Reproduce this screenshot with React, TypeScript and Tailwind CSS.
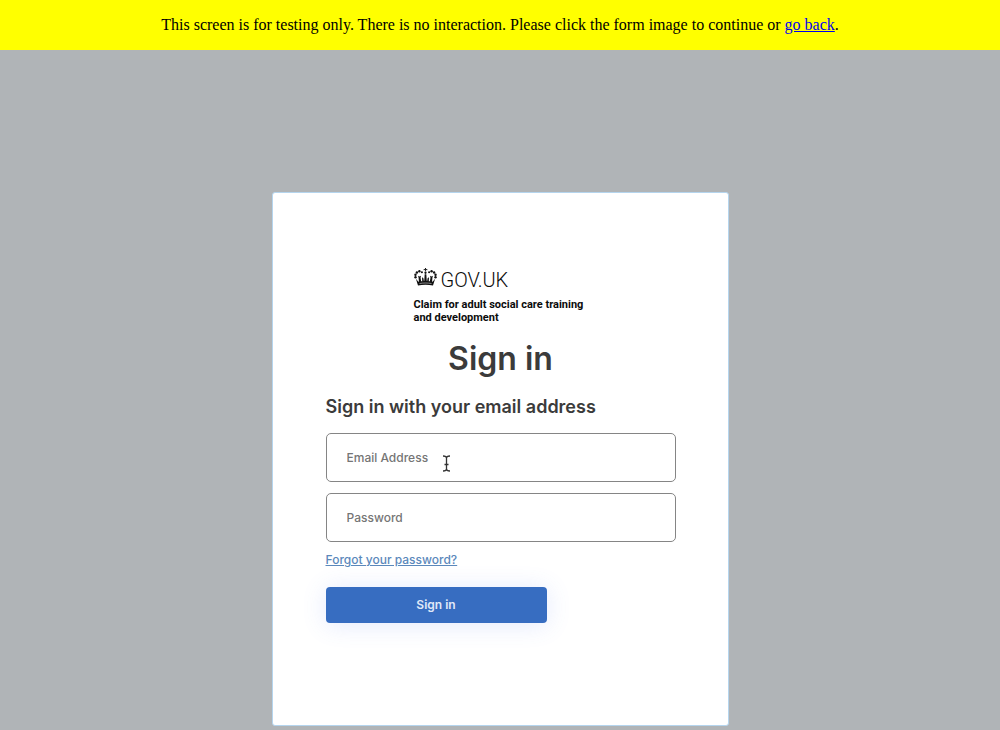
import type { ReactNode } from "react";

function Crown() {
  return (
    <svg viewBox="0 0 46 38" className="h-[19px] w-[23px] shrink-0" aria-hidden="true">
      <g fill="#111">
        <path d="M21.800 2h2.400l-.5 2.700 2.900-.6v2.600l-2.900-.6.5 2.600h-2.400l.5-2.600-2.900.6V4.100l2.900.6z" />
        <circle cx="23" cy="11.500" r="2.300" />
        <circle cx="15.800" cy="10.400" r="2.100" />
        <circle cx="10.800" cy="8.600" r="2.400" />
        <circle cx="5.800" cy="11" r="2.400" />
        <circle cx="2.900" cy="15.400" r="2.400" />
        <circle cx="3" cy="20.600" r="2.400" />
        <circle cx="30.200" cy="10.400" r="2.100" />
        <circle cx="35.200" cy="8.600" r="2.400" />
        <circle cx="40.200" cy="11" r="2.400" />
        <circle cx="43.100" cy="15.400" r="2.400" />
        <circle cx="43" cy="20.600" r="2.400" />
        <path d="M21.400 14.500h3.200l1 15h-5.200z" />
        <path d="M16 20.500l2.800 2.200 1 6-3.300 1zM30 20.500l-2.800 2.200-1 6 3.300 1z" />
        <path d="M8 17.500l2.800 1.500 3.200-1.500-1 4 1.500 8-4.500 1-.8-9z" />
        <path d="M38 17.500l-2.800 1.500-3.200-1.500 1 4-1.500 8 4.500 1 .8-9z" />
        <path d="M3.800 23.500l5 6c8-1.700 20.400-1.700 28.400 0l5-6L38 37c-9-1.800-21-1.800-30 0z" />
      </g>
      <path d="M11 33c8-1.300 16-1.300 24 0" fill="none" stroke="#fff" strokeWidth="1" />
    </svg>
  );
}

function TextCursor() {
  return (
    <svg
      viewBox="0 0 9 17"
      className="pointer-events-none absolute left-[116px] top-[22px] h-[17px] w-[9px]"
      fill="none"
      stroke="#333"
      strokeWidth="1.3"
      aria-hidden="true"
    >
      <path d="M1 1c2 0 3.500.4 3.500 2v11c0 1.600-1.500 2-3.500 2M8 1C6 1 4.500 1.400 4.500 3v11c0 1.600 1.500 2 3.500 2M2.500 9.500h4" />
    </svg>
  );
}

function Field({ label, type, children }: { label: string; type: string; children?: ReactNode }) {
  return (
    <div className="relative">
      <input
        type={type}
        aria-label={label}
        placeholder={label}
        className="block h-[49px] w-full rounded-[5px] border border-[#858585] bg-white px-5 text-[12px] font-medium text-[#333] placeholder:text-[#757575]"
      />
      {children}
    </div>
  );
}

export default function App() {
  return (
    <div className="flex min-h-screen flex-col bg-[#b0b4b7]">
      <p className="bg-[#ffff00] px-4 py-[13px] text-center font-['Liberation_Serif',serif] text-base text-black">
        This screen is for testing only. There is no interaction. Please click the form image to continue or{" "}
        <a href="#back" className="text-[#0000ee] underline">
          go back
        </a>
        .
      </p>
      <main className="mx-auto mt-[142px] mb-1 w-full max-w-[457px] rounded-[3px] border border-[#b5d5ee] bg-white pt-[74px] pr-[52px] pb-[102px] pl-[53px] font-['Inter',sans-serif] text-[#3b3b3b]">
        <header className="mx-auto w-[174px] text-[#0b0c0c]">
          <div className="flex h-6 items-start gap-1">
            <Crown />
            <span className="font-['Roboto',sans-serif] text-[20px] leading-[26px] font-light">GOV.UK</span>
          </div>
          <p className="mt-[7px] font-['Roboto',sans-serif] text-[11px] leading-[13px] font-bold whitespace-nowrap">
            Claim for adult social care training
            <br />
            and development
          </p>
        </header>
        <h1 className="mt-[14px] text-center text-[32px] leading-[42px] font-semibold">Sign in</h1>
        <h2 className="mt-[15px] text-[18px] leading-6 font-semibold">Sign in with your email address</h2>
        <form className="mt-[14px] flex flex-col gap-[11px]" onSubmit={(e) => e.preventDefault()}>
          <Field label="Email Address" type="email">
            <TextCursor />
          </Field>
          <Field label="Password" type="password" />
          <a href="#forgot" className="-mt-px self-start text-[12px] leading-4 font-medium text-[#5b88bb] underline">
            Forgot your password?
          </a>
          <button
            type="submit"
            className="mt-2 h-9 w-[221px] rounded-[4px] bg-[#376dc1] text-[12px] font-semibold text-[#e0e9f8] shadow-[0_2px_24px_rgba(80,120,240,0.16)]"
          >
            Sign in
          </button>
        </form>
      </main>
    </div>
  );
}
